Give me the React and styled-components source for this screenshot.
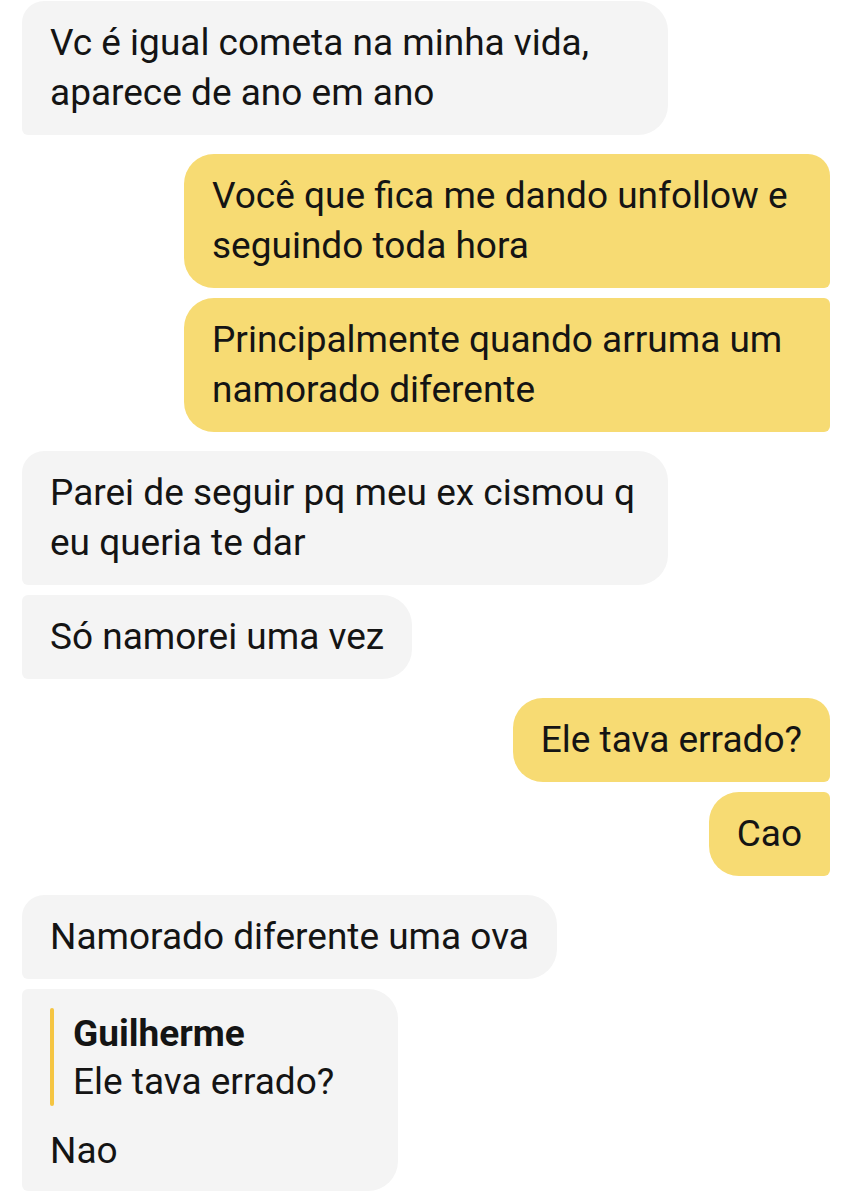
import React from "react";
import styled, { createGlobalStyle } from "styled-components";

const GlobalStyle = createGlobalStyle`
  body {
    margin: 0;
    background: #ffffff;
    font-family: Roboto, "Noto Sans", sans-serif;
    color: #141414;
  }
`;

const messages = [
  { mine: false, first: true, text: "Vc é igual cometa na minha vida, aparece de ano em ano" },
  { mine: true, first: true, text: "Você que fica me dando unfollow e seguindo toda hora" },
  { mine: true, text: "Principalmente quando arruma um namorado diferente" },
  { mine: false, first: true, text: "Parei de seguir pq meu ex cismou q eu queria te dar" },
  { mine: false, text: "Só namorei uma vez" },
  { mine: true, first: true, text: "Ele tava errado?" },
  { mine: true, text: "Cao" },
  { mine: false, first: true, text: "Namorado diferente uma ova" },
  {
    mine: false,
    text: "Nao",
    reply: { name: "Guilherme", text: "Ele tava errado?" },
  },
];

const App = () => {
  return (
    <>
      <GlobalStyle />
      <Chat>
        {messages.map((msg, i) => (
          <Row key={i} $mine={msg.mine} $gap={i === 0 ? 0 : msg.first ? 19 : 10}>
            <Bubble $mine={msg.mine} $first={msg.first} $reply={!!msg.reply}>
              {msg.reply && (
                <Quote>
                  <QuoteBar />
                  <QuoteBody>
                    <QuoteName>{msg.reply.name}</QuoteName>
                    <QuoteText>{msg.reply.text}</QuoteText>
                  </QuoteBody>
                </Quote>
              )}
              <Text $afterQuote={!!msg.reply}>{msg.text}</Text>
            </Bubble>
          </Row>
        ))}
      </Chat>
    </>
  );
};

export default App;

const Chat = styled.div`
  display: flex;
  flex-direction: column;
  padding: 1px 23px 0 22px;
`;

const Row = styled.div`
  display: flex;
  justify-content: ${(p) => (p.$mine ? "flex-end" : "flex-start")};
  margin-top: ${(p) => p.$gap}px;
`;

const Bubble = styled.div`
  max-width: 646px;
  box-sizing: border-box;
  padding: ${(p) => (p.$reply ? "19px 28px 15px" : "17px 28px")};
  background-color: ${(p) => (p.$mine ? "#f7db73" : "#f4f4f4")};
  border-radius: ${(p) =>
    p.$mine
      ? `30px ${p.$first ? 22 : 6}px 6px 30px`
      : `${p.$first ? 22 : 6}px 30px 30px 6px`};
  font-size: 37px;
  line-height: 50px;
`;

const Text = styled.div`
  margin-top: ${(p) => (p.$afterQuote ? "20px" : "0")};
`;

const Quote = styled.div`
  display: flex;
  align-items: stretch;
`;

const QuoteBar = styled.div`
  width: 4px;
  border-radius: 2px;
  background-color: #f5c542;
  flex-shrink: 0;
`;

const QuoteBody = styled.div`
  padding: 2px 36px 0 19px;
  line-height: 48px;
`;

const QuoteName = styled.div`
  font-weight: 700;
`;

const QuoteText = styled.div``;
